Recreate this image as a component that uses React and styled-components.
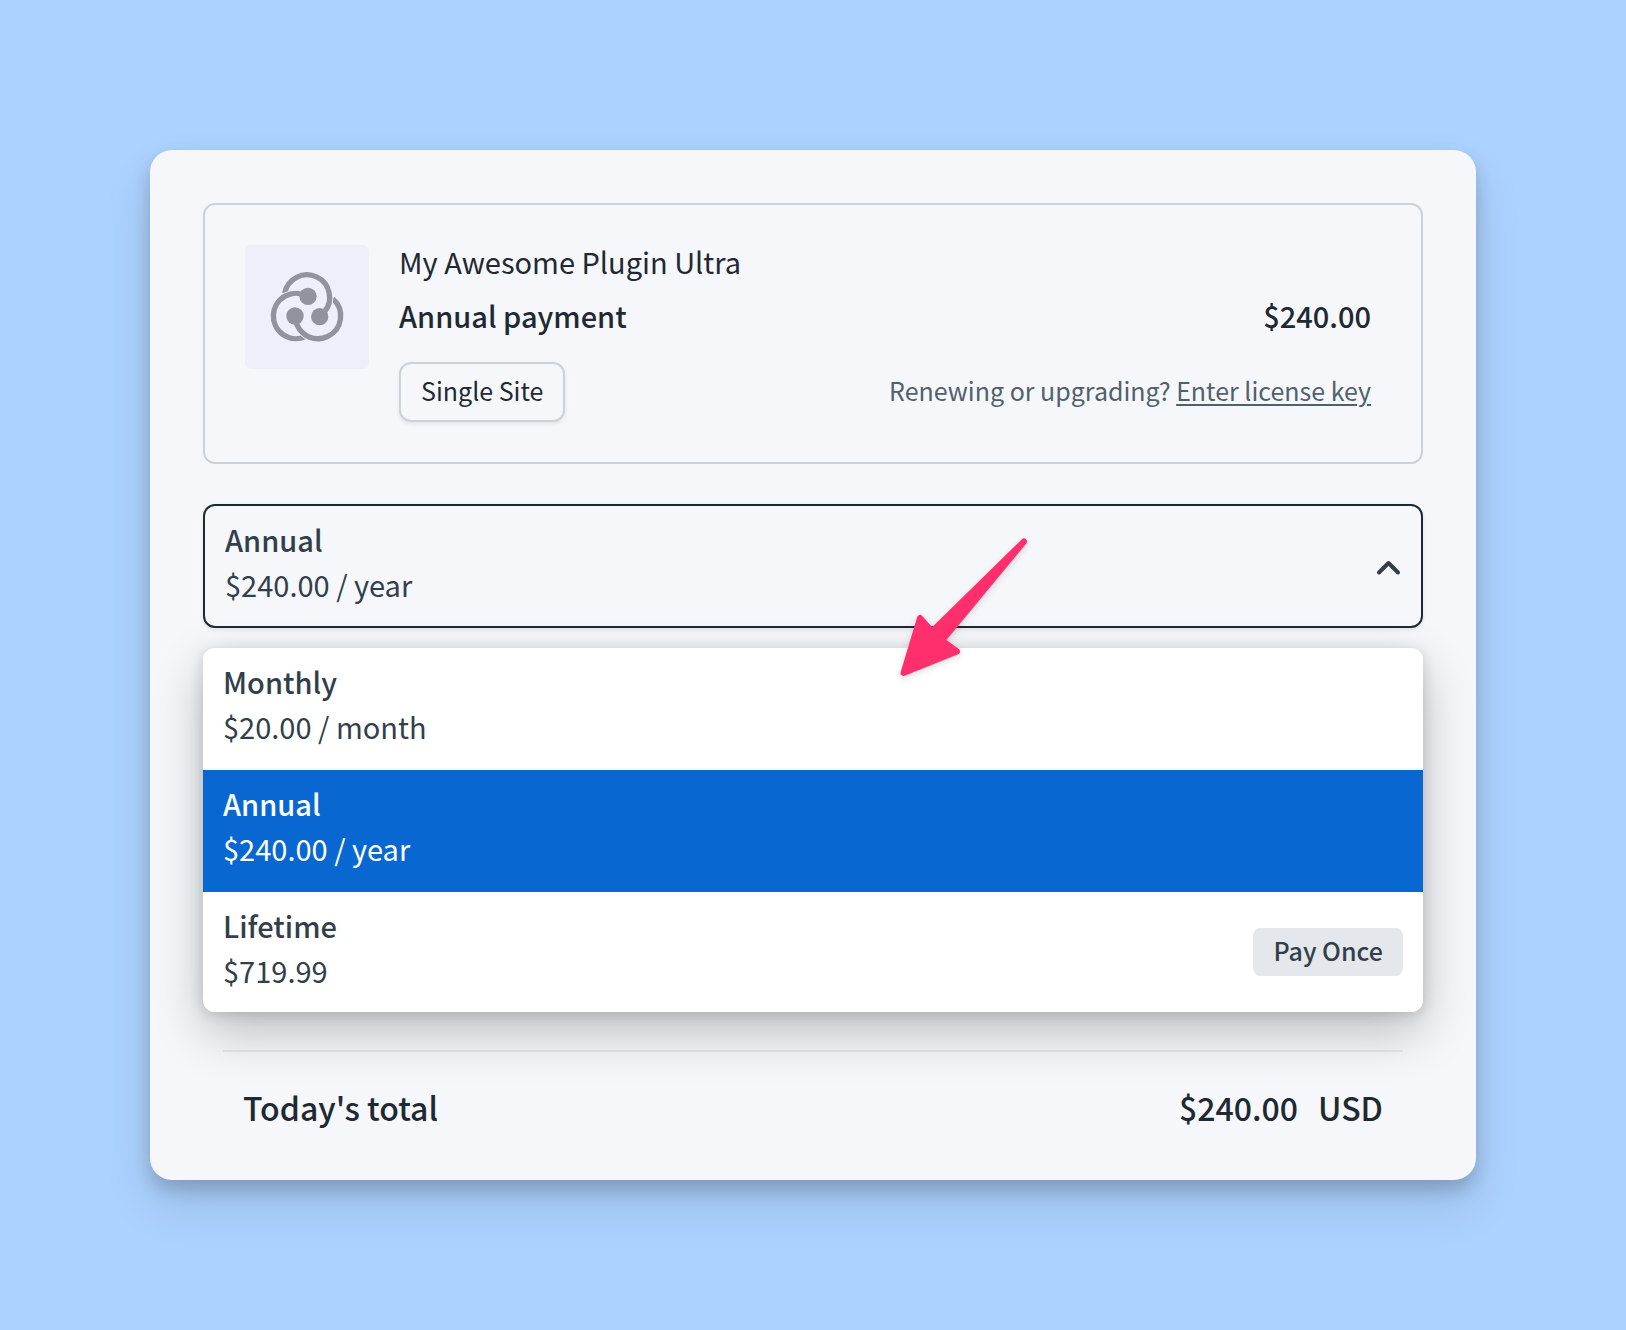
import React, { useState } from "react";
import styled, { createGlobalStyle } from "styled-components";

const plans = [
  { id: "monthly", name: "Monthly", price: "$20.00 / month" },
  { id: "annual", name: "Annual", price: "$240.00 / year" },
  { id: "lifetime", name: "Lifetime", price: "$719.99", badge: "Pay Once" },
];

const PluginLogo = () => (
  <LogoTile viewBox="45 45 372 372" role="img" aria-label="Plugin logo">
    <rect x="45" y="45" width="372" height="372" rx="18" fill="#efeff9" />
    <g fill="none" stroke="#93939c" strokeWidth="16">
      <path d="M196 258A68 68 0 1 0 308 206" />
      <path d="M164 190A68 68 0 1 1 283 246" stroke="#efeff9" strokeWidth="22" />
      <path d="M164 190A68 68 0 1 1 283 246" />
      <path d="M232 199A68 68 0 1 0 226 320" stroke="#efeff9" strokeWidth="22" />
      <path d="M232 199A68 68 0 1 0 226 320" />
      <path d="M196 258A68 68 0 0 0 264 326" stroke="#efeff9" strokeWidth="22" />
      <path d="M196 258A68 68 0 0 0 270 326" />
    </g>
    <g fill="#93939c">
      <circle cx="234" cy="199" r="26" />
      <circle cx="195" cy="258" r="26" />
      <circle cx="269" cy="260" r="26" />
    </g>
  </LogoTile>
);

const PlanPicker = ({ selected, setSelected }) => {
  const [open, setOpen] = useState(true);
  const current = plans.find((plan) => plan.id === selected);

  const handleSelect = (id) => {
    setSelected(id);
    setOpen(false);
  };

  return (
    <PickerContainer>
      <PickerButton
        type="button"
        aria-haspopup="listbox"
        aria-expanded={open}
        onClick={() => setOpen(!open)}
      >
        <PlanText>
          <PlanName>{current.name}</PlanName>
          <span>{current.price}</span>
        </PlanText>
        <Chevron $open={open} viewBox="0 0 24 16" aria-hidden="true">
          <path d="M2 14.5L11.5 5L21 14.5" />
        </Chevron>
      </PickerButton>
      {open && (
        <PlanList role="listbox" aria-label="Billing cycle">
          {plans.map((plan) => (
            <PlanOption
              key={plan.id}
              role="option"
              aria-selected={plan.id === selected}
              $active={plan.id === selected}
              onClick={() => handleSelect(plan.id)}
            >
              <PlanText>
                <PlanName>{plan.name}</PlanName>
                <span>{plan.price}</span>
              </PlanText>
              {plan.badge && <Badge>{plan.badge}</Badge>}
            </PlanOption>
          ))}
        </PlanList>
      )}
      <Arrow viewBox="0 0 130 145" aria-hidden="true">
        <path d="M124 6.5L32 96.5L20 83L3.5 138L57 116.5L42 105.5Z" />
      </Arrow>
    </PickerContainer>
  );
};

const App = () => {
  const [selected, setSelected] = useState("annual");

  return (
    <Page>
      <GlobalStyle />
      <Card>
        <Product>
          <PluginLogo />
          <ProductInfo>
            <ProductName>My Awesome Plugin Ultra</ProductName>
            <PaymentRow>
              <span>Annual payment</span>
              <span>$240.00</span>
            </PaymentRow>
            <LicenseRow>
              <SiteButton type="button">Single Site</SiteButton>
              <Renewal>
                Renewing or upgrading? <a href="#license">Enter license key</a>
              </Renewal>
            </LicenseRow>
          </ProductInfo>
        </Product>
        <PlanPicker selected={selected} setSelected={setSelected} />
        <Summary>
          <span>Today's total</span>
          <Total>
            <span>$240.00</span>
            <span>USD</span>
          </Total>
        </Summary>
      </Card>
    </Page>
  );
};

export default App;

const GlobalStyle = createGlobalStyle`
  * {
    box-sizing: border-box;
  }
  body {
    margin: 0;
    background-color: #acd2ff;
    color: #1f2933;
    font-family: "Noto Sans CJK SC", "Noto Sans", sans-serif;
    font-size: 29px;
  }
  button {
    font: inherit;
    color: inherit;
    cursor: pointer;
  }
`;

const Page = styled.main`
  min-height: 100vh;
  padding: 150px;
`;
const Card = styled.div`
  padding: 53px 53px 49px;
  border-radius: 22px;
  background-color: #f5f7fb;
  box-shadow: 0 10px 18px rgba(0, 0, 0, 0.18), 0 25px 50px rgba(0, 0, 0, 0.11);
`;

const Product = styled.section`
  display: flex;
  align-items: flex-start;
  gap: 30px;
  padding: 40px 50px 40px 40px;
  border: 2px solid #cbd2d9;
  border-radius: 12px;
`;
const LogoTile = styled.svg`
  flex: none;
  width: 124px;
  height: 124px;
`;
const ProductInfo = styled.div`
  flex: 1;
`;
const ProductName = styled.div`
  line-height: 32px;
`;
const PaymentRow = styled.div`
  display: flex;
  justify-content: space-between;
  margin: 16px 0 25px;
  font-weight: 500;
  line-height: 44px;
`;
const LicenseRow = styled.div`
  display: flex;
  align-items: center;
  justify-content: space-between;
  font-size: 25px;
`;
const SiteButton = styled.button`
  height: 60px;
  padding: 0 20px 4px;
  border: 2px solid #cbd2d9;
  border-radius: 12px;
  background-color: #f5f7fb;
  box-shadow: 0 2px 4px rgba(0, 0, 0, 0.08);
`;
const Renewal = styled.span`
  padding-bottom: 4px;
  color: #52606d;

  a {
    color: inherit;
    text-decoration-thickness: 2px;
    text-underline-offset: 3px;
  }
`;

const PickerContainer = styled.div`
  position: relative;
  z-index: 1;
  margin-top: 40px;
  color: #323f4b;
`;
const PickerButton = styled.button`
  display: flex;
  align-items: center;
  justify-content: space-between;
  width: 100%;
  height: 124px;
  padding: 0 20px;
  border: 2px solid #1f2933;
  border-radius: 12px;
  background-color: #f5f7fb;
  text-align: left;
  box-shadow: 0 2px 4px rgba(0, 0, 0, 0.08);
`;
const PlanText = styled.span`
  display: flex;
  flex-direction: column;
  padding-bottom: 8px;
  line-height: 45px;
`;
const PlanName = styled.span`
  font-weight: 500;
`;
const Chevron = styled.svg`
  width: 24px;
  height: 16px;
  overflow: visible;
  fill: none;
  stroke: #323f4b;
  stroke-width: 4;
  stroke-linecap: round;
  stroke-linejoin: round;
  transform: ${(props) => (props.$open ? "none" : "rotate(180deg)")};
`;
const PlanList = styled.ul`
  margin: 20px 0 0;
  padding: 0;
  border-radius: 12px;
  background-color: #fff;
  list-style: none;
  overflow: hidden;
  box-shadow: 0 2px 14px rgba(0, 0, 0, 0.15), 0 20px 50px rgba(0, 0, 0, 0.23);
`;
const PlanOption = styled.li`
  display: flex;
  align-items: center;
  justify-content: space-between;
  padding: 11px 20px;
  border-bottom: 2px solid ${(props) => (props.$active ? "#0967d2" : "#f9f9fb")};
  background-color: ${(props) => (props.$active ? "#0967d2" : "#fff")};
  color: ${(props) => (props.$active ? "#fff" : "#323f4b")};
  cursor: pointer;

  &:last-child {
    border-bottom: none;
  }
`;
const Badge = styled.span`
  padding: 0 20px 4px;
  border-radius: 8px;
  background-color: #e4e7eb;
  font-size: 25px;
  font-weight: 500;
  line-height: 44px;
`;
const Arrow = styled.svg`
  position: absolute;
  top: 31px;
  left: 50%;
  width: 130px;
  height: 145px;
  margin-left: 87px;
  overflow: visible;
  pointer-events: none;
  fill: #ff2e6c;
  stroke: #ff2e6c;
  stroke-width: 6;
  stroke-linejoin: round;
  filter: drop-shadow(0 2px 3px rgba(0, 0, 0, 0.15));
`;

const Summary = styled.section`
  display: flex;
  align-items: center;
  justify-content: space-between;
  margin: 38px 20px 0;
  padding: 31px 20px 0;
  border-top: 2px solid #e4e7eb;
  font-size: 32px;
  font-weight: 500;
  line-height: 48px;
`;
const Total = styled.span`
  display: flex;
  gap: 20px;
`;
